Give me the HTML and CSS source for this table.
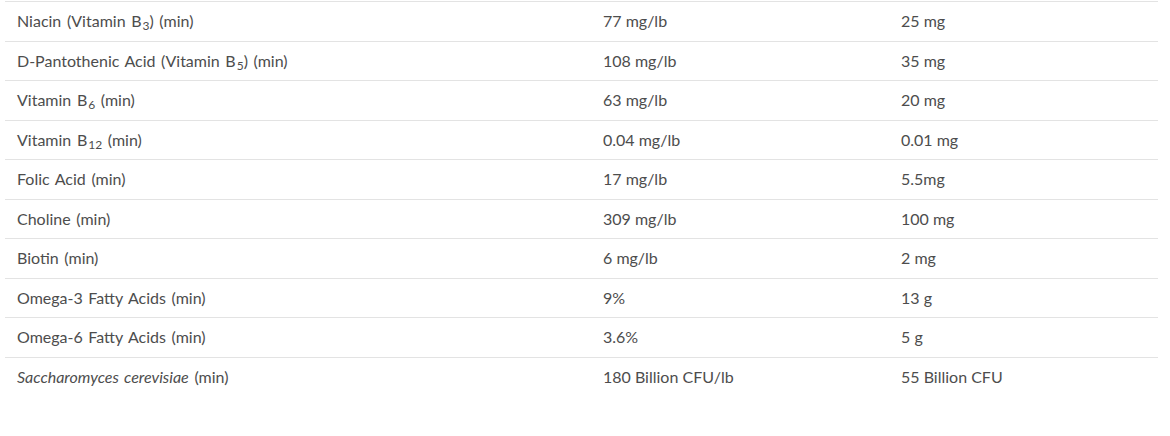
FILE: index.html
```html
<!DOCTYPE html>
<html>
<head>
<meta charset="utf-8">
<link rel="stylesheet" href="styles.css">
</head>
<body>
<div class="wrap">
<table class="nutri">
<tbody>
<tr><td class="c1">Niacin (Vitamin B<sub>3</sub>) (min)</td><td class="c2">77 mg/lb</td><td class="c3">25 mg</td></tr>
<tr><td class="c1">D-Pantothenic Acid (Vitamin B<sub>5</sub>) (min)</td><td class="c2">108 mg/lb</td><td class="c3">35 mg</td></tr>
<tr><td class="c1">Vitamin B<sub>6</sub> (min)</td><td class="c2">63 mg/lb</td><td class="c3">20 mg</td></tr>
<tr><td class="c1">Vitamin B<sub>12</sub> (min)</td><td class="c2">0.04 mg/lb</td><td class="c3">0.01 mg</td></tr>
<tr><td class="c1">Folic Acid (min)</td><td class="c2">17 mg/lb</td><td class="c3">5.5mg</td></tr>
<tr><td class="c1">Choline (min)</td><td class="c2">309 mg/lb</td><td class="c3">100 mg</td></tr>
<tr><td class="c1">Biotin (min)</td><td class="c2">6 mg/lb</td><td class="c3">2 mg</td></tr>
<tr><td class="c1">Omega-3 Fatty Acids (min)</td><td class="c2">9%</td><td class="c3">13 g</td></tr>
<tr><td class="c1">Omega-6 Fatty Acids (min)</td><td class="c2">3.6%</td><td class="c3">5 g</td></tr>
<tr><td class="c1"><em>Saccharomyces cerevisiae</em> (min)</td><td class="c2">180 Billion CFU/lb</td><td class="c3">55 Billion CFU</td></tr>
</tbody>
</table>
</div>
</body>
</html>
```
FILE: styles.css
```css
html, body {
  margin: 0;
  padding: 0;
  background: #fff;
}
.wrap {
  padding: 1px 12px 0 5px;
}
.nutri {
  width: 1153px;
  border-collapse: collapse;
  font-family: Lato, "Open Sans", sans-serif;
  font-size: 16px;
  line-height: 22.5px;
  color: #4d4d4d;
}
.nutri td {
  padding: 8px 12px;
  border-top: 1px solid #e3e3e3;
  vertical-align: middle;
  text-align: left;
}
.nutri .c1 { width: 562px; word-spacing: 1.5px; }
.nutri .c2 { width: 274px; }
.nutri sub {
  font-size: 12px;
  line-height: 0;
  vertical-align: -3px;
  margin-left: 1px;
}
.nutri em { font-style: italic; }
```
